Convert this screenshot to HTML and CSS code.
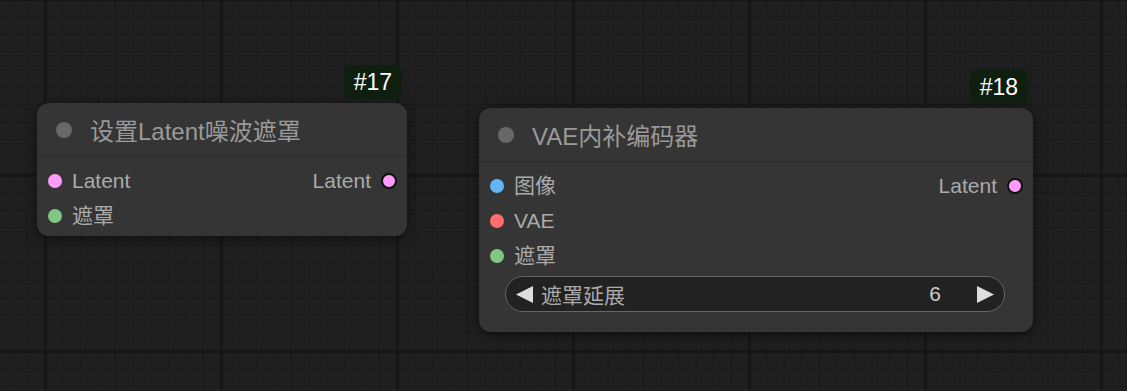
FILE: index.html
```html
<!DOCTYPE html>
<html lang="zh">
<head>
    <meta charset="UTF-8">
    <title>Graph</title>
    <link rel="stylesheet" href="styles.css">
</head>
<body>
    <div class="canvas">
        <!-- Node #17 -->
        <div class="node node-17">
            <div class="badge">#17</div>
            <div class="node-title">
                <span class="title-dot"></span>
                <span class="title-text">设置Latent噪波遮罩</span>
            </div>
            <div class="node-body">
                <div class="row">
                    <div class="slot-in"><span class="dot latent"></span>Latent</div>
                    <div class="slot-out">Latent<span class="dot latent out"></span></div>
                </div>
                <div class="row">
                    <div class="slot-in"><span class="dot mask"></span>遮罩</div>
                </div>
            </div>
        </div>

        <!-- Node #18 -->
        <div class="node node-18">
            <div class="badge">#18</div>
            <div class="node-title">
                <span class="title-dot"></span>
                <span class="title-text">VAE内补编码器</span>
            </div>
            <div class="node-body">
                <div class="row">
                    <div class="slot-in"><span class="dot image"></span>图像</div>
                    <div class="slot-out">Latent<span class="dot latent out"></span></div>
                </div>
                <div class="row">
                    <div class="slot-in"><span class="dot vae"></span>VAE</div>
                </div>
                <div class="row">
                    <div class="slot-in"><span class="dot mask"></span>遮罩</div>
                </div>
                <div class="widget">
                    <svg class="arrow" width="17" height="17" viewBox="0 0 17 17"><polygon points="17,0 17,17 0,8.5" fill="#ddd"/></svg>
                    <span class="widget-label">遮罩延展</span>
                    <span class="widget-value">6</span>
                    <svg class="arrow" width="17" height="17" viewBox="0 0 17 17"><polygon points="0,0 0,17 17,8.5" fill="#ddd"/></svg>
                </div>
            </div>
        </div>
    </div>
</body>
</html>
```

FILE: styles.css
```css
/* Canvas */
body {
    margin: 0;
    padding: 0;
    font-family: "Liberation Sans", "Noto Sans CJK SC", Arial, sans-serif;
    background: #1f1f1f;
}
.canvas {
    position: relative;
    width: 1127px;
    height: 391px;
    overflow: hidden;
    background-color: #1f1f1f;
    background-image:
        linear-gradient(to right, #161616 3px, transparent 3px),
        linear-gradient(to bottom, #161616 3px, transparent 3px),
        linear-gradient(to right, #191919 1px, transparent 1px),
        linear-gradient(to bottom, #191919 1px, transparent 1px);
    background-size: 176px 176px, 176px 176px, 17.6px 17.6px, 17.6px 17.6px;
    background-position: 44px 0, 0 174px, 9.5px 0, 0 16px;
}

/* Nodes */
.node {
    position: absolute;
    background: #353535;
    border-radius: 12px;
    box-shadow: 0 2px 12px rgba(0, 0, 0, 0.55);
    color: #aaa;
}
.node-17 {
    left: 37px;
    top: 103px;
    width: 370px;
    height: 133px;
}
.node-18 {
    left: 479px;
    top: 108px;
    width: 554px;
    height: 224px;
}
.badge {
    position: absolute;
    right: 5px;
    top: -38px;
    height: 34px;
    padding: 0 10px;
    display: flex;
    align-items: center;
    background: #0e1f10;
    border-radius: 8px;
    color: #fff;
    font-size: 23px;
}
.node-title {
    height: 53px;
    display: flex;
    align-items: center;
    border-bottom: 1px solid #2b2b2b;
}
.title-dot {
    width: 16px;
    height: 16px;
    margin-left: 19px;
    margin-right: 18px;
    border-radius: 50%;
    background: #686868;
}
.title-text {
    font-size: 24px;
    color: #9a9a9a;
}
.node-body {
    padding-top: 6px;
}
.row {
    height: 35px;
    display: flex;
    align-items: center;
    justify-content: space-between;
    font-size: 21px;
}
.slot-in, .slot-out {
    display: flex;
    align-items: center;
    line-height: 1;
}
.dot {
    width: 14px;
    height: 14px;
    border-radius: 50%;
    margin-left: 11px;
    margin-right: 10px;
}
.dot.out {
    width: 12px;
    height: 12px;
    border: 2px solid #111;
    margin-left: 10px;
    margin-right: 10px;
}
.latent { background: #ff9cf9; }
.mask { background: #81c784; }
.image { background: #64b5f6; }
.vae { background: #ff6e6e; }

/* Number widget */
.widget {
    height: 34px;
    margin: 3px 28px 0 26px;
    display: flex;
    align-items: center;
    background: #222;
    border: 1px solid #666;
    border-radius: 18px;
    font-size: 21px;
}
.widget .arrow:first-child {
    margin-left: 10px;
}
.widget .arrow:last-child {
    margin-right: 10px;
}
.widget-label {
    margin-left: 8px;
    flex: 1;
    color: #aaa;
}
.widget-value {
    margin-right: 36px;
    color: #ccc;
}
```
